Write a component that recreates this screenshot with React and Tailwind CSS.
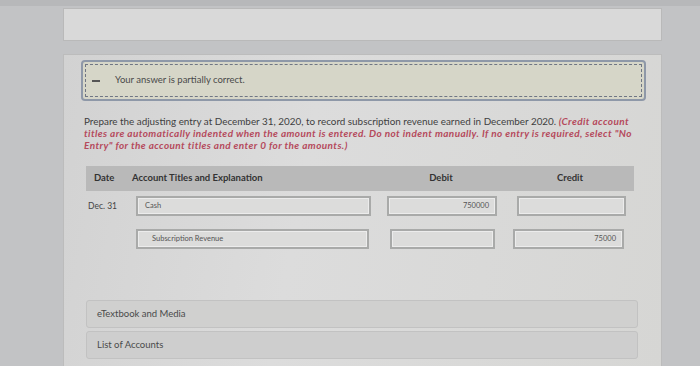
import React from "react";

const INPUT =
  "h-[20px] border-2 border-[#a9aaa9] bg-[#dcdcdb] shadow-[inset_0_0_0_1px_#ececec] flex items-center text-[7.5px] text-[#555]";

function App() {
  return (
    <div className="w-[700px] h-[366px] overflow-hidden bg-[#c2c3c5] font-['Lato',sans-serif]">
      <div className="h-[6px] bg-[#b7b8ba]" />
      <div className="ml-[63px] w-[599px]">
        <div className="mt-[2px] h-[33px] border border-[#b9b9b9] bg-[#d9d9d9]" />
        <div className="mt-[13px] h-[320px] border border-[#bcbcbc] bg-[linear-gradient(100deg,#d2d2d2_0%,#dcdcdc_40%,#d6d6d4_100%)] pt-[5px] pl-[17px]">
          <div className="w-[565px] h-[41px] rounded-[4px] border-2 border-[#8e98a8] bg-[#d6d6c8] p-[2px]">
            <div className="h-full border border-dashed border-[#6f7684] flex items-center pl-[6px]">
              <span className="w-[8px] h-[2px] bg-[#555] mr-[15px]" />
              <span className="text-[9.5px] text-[#4a4a4a]">Your answer is partially correct.</span>
            </div>
          </div>

          <p className="mt-[14px] pl-[3px] text-[9.9px] leading-[12px] text-[#3e3e3e] whitespace-nowrap">
            Prepare the adjusting entry at December 31, 2020, to record subscription revenue earned in December 2020.{" "}
            <span className="italic font-bold text-[#b54a5c] text-[10px] tracking-[0.4px]">
              (Credit account
              <br />
              titles are automatically indented when the amount is entered. Do not indent manually. If no entry is required, select "No
              <br />
              Entry" for the account titles and enter 0 for the amounts.)
            </span>
          </p>

          <div className="mt-[15px] ml-[5px] w-[548px] h-[25px] bg-[#b9b9b9] flex items-center text-[9.5px] font-bold text-[#333]">
            <div className="w-[46px] pl-[8px]">Date</div>
            <div className="w-[244px]">Account Titles and Explanation</div>
            <div className="w-[130px] text-center">Debit</div>
            <div className="w-[128px] text-center">Credit</div>
          </div>

          <div className="ml-[5px] mt-[5px] flex items-start">
            <div className="w-[50px] pl-[2px] pt-[4px] text-[8.5px] text-[#444]">Dec. 31</div>
            <div className={INPUT + " w-[235px] pl-[7px]"}>Cash</div>
            <div className={INPUT + " ml-[16px] w-[110px] justify-end pr-[6px]"}>750000</div>
            <div className={INPUT + " ml-[20px] w-[109px]"} />
          </div>

          <div className="ml-[5px] mt-[13px] flex items-start">
            <div className="w-[50px]" />
            <div className={INPUT + " w-[233px] pl-[14px] text-[#8a8a8a]"}>Subscription Revenue</div>
            <div className={INPUT + " ml-[21px] w-[105px]"} />
            <div className={INPUT + " ml-[18px] w-[111px] justify-end pr-[6px]"}>75000</div>
          </div>

          <div className="mt-[51px] ml-[5px] w-[552px] flex flex-col gap-[3px]">
            <div className="h-[28px] rounded-[3px] border border-[#c2c2c2] bg-[#d0d0cf] flex items-center pl-[10px] text-[9.5px] text-[#4a4a4a]">
              eTextbook and Media
            </div>
            <div className="h-[28px] rounded-[3px] border border-[#c2c2c2] bg-[#cecece] flex items-center pl-[10px] text-[9.5px] text-[#4a4a4a]">
              List of Accounts
            </div>
          </div>
        </div>
      </div>
    </div>
  );
}

export default App;
